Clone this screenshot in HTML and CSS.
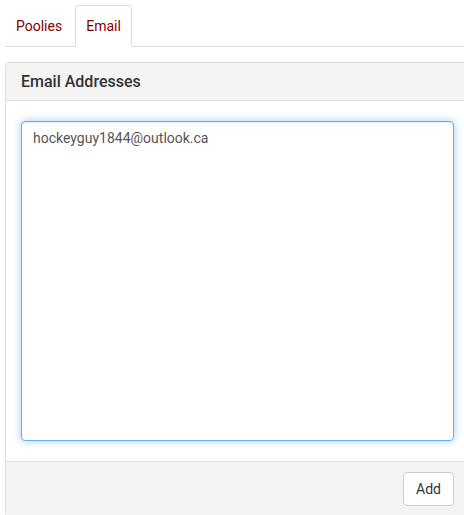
FILE: index.html
```html
<!DOCTYPE html>
<html>
<head>
<meta charset="utf-8">
<link rel="stylesheet" href="styles.css">
</head>
<body>
<div class="page">
  <ul class="tabs">
    <li class="tab"><a href="#">Poolies</a></li>
    <li class="tab active"><a href="#">Email</a></li>
  </ul>
  <div class="panel">
    <div class="panel-heading">Email Addresses</div>
    <div class="panel-body">
      <textarea class="emails" autofocus>hockeyguy1844@outlook.ca</textarea>
    </div>
    <div class="panel-footer">
      <button class="btn">Add</button>
    </div>
  </div>
</div>
</body>
</html>
```

FILE: styles.css
```css
html, body {
  margin: 0;
  padding: 0;
  overflow: hidden;
  background: #fff;
}
body {
  font-family: Roboto, "Liberation Sans", sans-serif;
  font-size: 14px;
  color: #333;
}
.page {
  width: 470px;
  padding: 5px 0 0 5px;
  box-sizing: border-box;
}
.tabs {
  list-style: none;
  margin: 0 -10px 0 0;
  padding: 0;
  display: flex;
  border-bottom: 1px solid #ddd;
}
.tab {
  margin-right: 2px;
  margin-bottom: -1px;
}
.tab a {
  display: block;
  padding: 10px 10px;
  line-height: 20px;
  border: 1px solid transparent;
  border-radius: 4px 4px 0 0;
  color: #800000;
  text-decoration: none;
}
.tab.active a {
  border-color: #ddd;
  border-bottom-color: #fff;
  background: #fff;
}
.panel {
  margin-top: 15px;
  width: 465px;
  box-sizing: border-box;
  border: 1px solid #ddd;
  border-radius: 4px;
}
.panel-heading {
  background: #f4f4f4;
  border-bottom: 1px solid #ddd;
  padding: 10px 15px;
  line-height: 17px;
  font-size: 16px;
  font-weight: 500;
  color: #333;
  border-radius: 3px 3px 0 0;
}
.panel-body {
  padding: 20px 15px 20px;
}
.emails {
  display: block;
  width: 100%;
  height: 320px;
  box-sizing: border-box;
  padding: 6px 11px;
  font-family: Roboto, "Liberation Sans", sans-serif;
  font-size: 14px;
  line-height: 20px;
  color: #555;
  border: 1px solid #66afe9;
  border-radius: 4px;
  outline: none;
  resize: none;
  box-shadow: inset 0 1px 1px rgba(0,0,0,.075), 0 0 8px rgba(102,175,233,.6);
}
.panel-footer {
  background: #f4f4f4;
  border-top: 1px solid #ddd;
  padding: 10px 15px;
  display: flex;
  justify-content: flex-end;
}
.btn {
  font-family: Roboto, "Liberation Sans", sans-serif;
  font-size: 14px;
  line-height: 20px;
  color: #333;
  background: #fff;
  border: 1px solid #ccc;
  border-radius: 4px;
  padding: 6px 12px;
  height: 34px;
}
```
